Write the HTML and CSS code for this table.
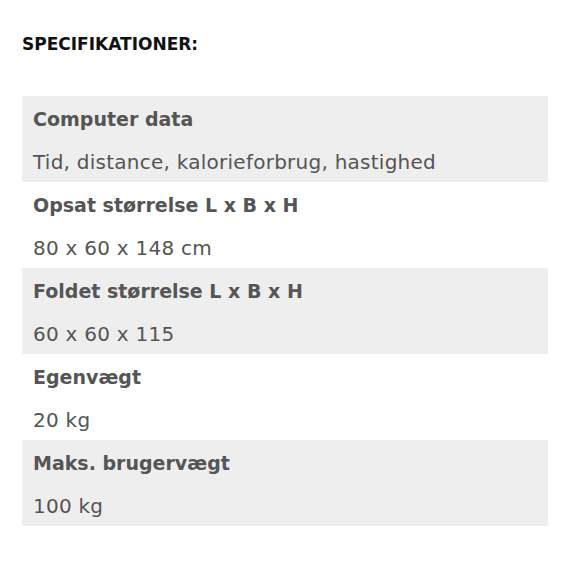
FILE: index.html
```html
<!DOCTYPE html>
<html lang="da">
<head>
<meta charset="utf-8">
<link rel="stylesheet" href="styles.css">
</head>
<body>
<div class="page">
  <h2 class="title">SPECIFIKATIONER:</h2>
  <div class="spec-table">
    <div class="spec-item">
      <div class="spec-label">Computer data</div>
      <div class="spec-value">Tid, distance, kalorieforbrug, hastighed</div>
    </div>
    <div class="spec-item">
      <div class="spec-label">Opsat størrelse L x B x H</div>
      <div class="spec-value">80 x 60 x 148 cm</div>
    </div>
    <div class="spec-item">
      <div class="spec-label">Foldet størrelse L x B x H</div>
      <div class="spec-value">60 x 60 x 115</div>
    </div>
    <div class="spec-item">
      <div class="spec-label">Egenvægt</div>
      <div class="spec-value">20 kg</div>
    </div>
    <div class="spec-item">
      <div class="spec-label">Maks. brugervægt</div>
      <div class="spec-value">100 kg</div>
    </div>
  </div>
</div>
</body>
</html>
```
FILE: styles.css
```css
html, body {
  margin: 0;
  padding: 0;
  background: #ffffff;
}
.page {
  padding: 34px 24px 0 22px;
  font-family: "DejaVu Sans", sans-serif;
}
.title {
  margin: 0 0 42px 0;
  font-size: 17px;
  line-height: 20px;
  font-weight: bold;
  color: #111111;
}
.spec-table {
  display: flex;
  flex-direction: column;
}
.spec-item {
  display: flex;
  flex-direction: column;
}
.spec-item:nth-child(odd) {
  background: #eeeeee;
}
.spec-label, .spec-value {
  box-sizing: border-box;
  height: 43px;
  padding-top: 4px;
  line-height: 39px;
  padding-left: 11px;
  color: #555555;
}
.spec-label {
  font-size: 19px;
  font-weight: bold;
}
.spec-value {
  font-size: 20px;
  letter-spacing: 0.25px;
}
```
